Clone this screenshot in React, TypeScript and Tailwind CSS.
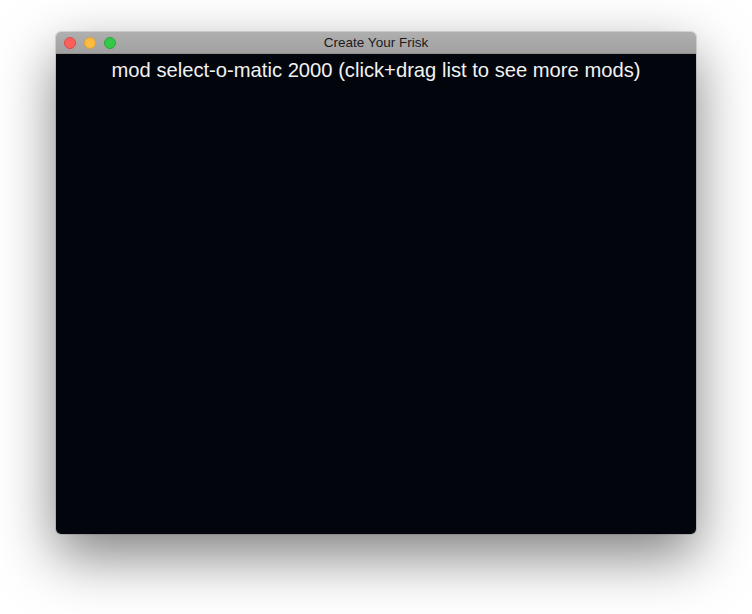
export default function App() {
  return (
    <div className="w-[752px] h-[614px] bg-white pt-[32px] pl-[56px]">
      <div className="w-[640px] rounded-[5px] overflow-hidden shadow-[0_22px_56px_rgba(0,0,0,0.5),0_0_0_1px_rgba(0,0,0,0.12)]">
        {/* Title bar */}
        <div className="relative h-[22px] bg-gradient-to-b from-[#b0afb0] to-[#a2a1a2] flex items-center justify-center border-b border-[#8f8f8f]">
          <div className="absolute left-[8px] top-[5px] flex gap-[8px]">
            <span className="w-[12px] h-[12px] rounded-full bg-[#fc605c] border border-[#de4a44]" />
            <span className="w-[12px] h-[12px] rounded-full bg-[#fdbc40] border border-[#dea236]" />
            <span className="w-[12px] h-[12px] rounded-full bg-[#34c84a] border border-[#27aa35]" />
          </div>
          <span className="text-[13.5px] text-[#1a1a1a] font-['Liberation_Sans',sans-serif] leading-none">
            Create Your Frisk
          </span>
        </div>
        {/* Content */}
        <div className="h-[480px] bg-[#02050c] flex justify-center">
          <p className="mt-[4px] text-[20.2px] leading-[24px] text-[#f2f2f2] font-['Liberation_Sans',sans-serif]">
            mod select-o-matic 2000 (click+drag list to see more mods)
          </p>
        </div>
      </div>
    </div>
  );
}
